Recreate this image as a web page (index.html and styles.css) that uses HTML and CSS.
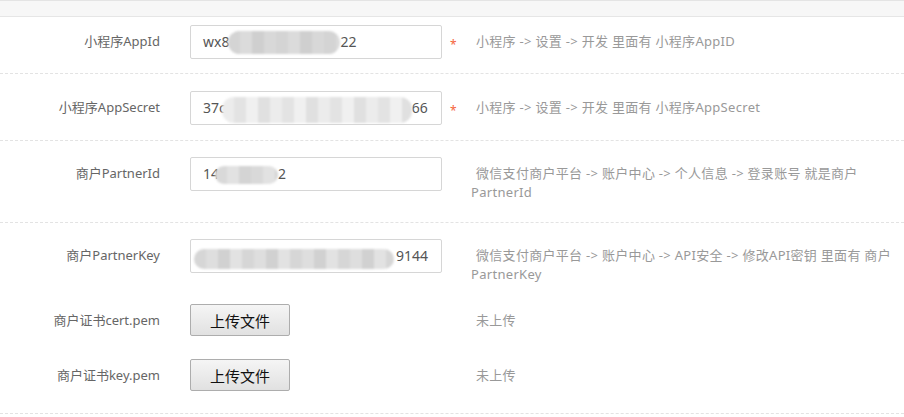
FILE: index.html
```html
<!DOCTYPE html>
<html lang="zh-CN">
<head>
<meta charset="utf-8">
<title>小程序支付设置</title>
<link rel="stylesheet" href="styles.css">
</head>
<body>
<div class="topbar"></div>
<form class="form">
  <div class="row first">
    <label class="lbl">小程序AppId</label>
    <div class="field"><div class="input">wx8<span class="mask m1"></span>22</div></div>
    <span class="req">*</span>
    <div class="help">小程序 -&gt; 设置 -&gt; 开发 里面有 小程序AppID</div>
  </div>
  <div class="row">
    <label class="lbl">小程序AppSecret</label>
    <div class="field"><div class="input">37c<span class="mask m2"></span>66</div></div>
    <span class="req">*</span>
    <div class="help">小程序 -&gt; 设置 -&gt; 开发 里面有 小程序AppSecret</div>
  </div>
  <div class="row">
    <label class="lbl">商户PartnerId</label>
    <div class="field"><div class="input">14<span class="mask m3"></span>2</div></div>
    <span class="req"></span>
    <div class="help">微信支付商户平台 -&gt; 账户中心 -&gt; 个人信息 -&gt; 登录账号 就是商户<br>PartnerId</div>
  </div>
  <div class="row noborder">
    <label class="lbl">商户PartnerKey</label>
    <div class="field"><div class="input"><span class="mask m4"></span>9144</div></div>
    <span class="req"></span>
    <div class="help">微信支付商户平台 -&gt; 账户中心 -&gt; API安全 -&gt; 修改API密钥 里面有 商户<br>PartnerKey</div>
  </div>
  <div class="files">
    <div class="frow">
      <label class="lbl">商户证书cert.pem</label>
      <div class="field"><button type="button" class="btn">上传文件</button></div>
      <span class="req"></span>
      <div class="help">未上传</div>
    </div>
    <div class="frow">
      <label class="lbl">商户证书key.pem</label>
      <div class="field"><button type="button" class="btn">上传文件</button></div>
      <span class="req"></span>
      <div class="help">未上传</div>
    </div>
  </div>
</form>
</body>
</html>
```
FILE: styles.css
```css
body {
  margin: 0;
  background: #fff;
  font-family: "Noto Sans", "Noto Sans CJK SC", sans-serif;
  color: #666;
}
.topbar {
  height: 15px;
  background: #f7f7f7;
  border-top: 1px solid #e4e4e4;
  border-bottom: 1px solid #e6e6e6;
}
.form {
  margin: 0;
}
.row {
  display: flex;
  align-items: flex-start;
  padding: 16px 0 15px;
  border-bottom: 1px dashed #e3e3e3;
}
.row.first {
  padding-top: 8px;
  padding-bottom: 14px;
}
.row.first + .row {
  padding-top: 17px;
}
.row.noborder {
  border-bottom: none;
}
.files {
  display: flex;
  flex-direction: column;
  gap: 23px;
  padding-bottom: 22px;
  border-bottom: 1px dashed #e3e3e3;
}
.frow {
  display: flex;
  align-items: flex-start;
}
.lbl {
  flex: none;
  width: 160px;
  text-align: right;
  padding-top: 7px;
  font-size: 13px;
  line-height: 19px;
  color: #666;
  white-space: nowrap;
}
.field {
  flex: none;
  width: 252px;
  margin-left: 30px;
}
.input {
  box-sizing: border-box;
  height: 34px;
  border: 1px solid #d6d6d6;
  border-radius: 2px;
  padding: 0 12px;
  font-size: 14px;
  line-height: 32px;
  color: #555;
  white-space: nowrap;
  overflow: hidden;
}
.mask {
  display: inline-block;
  vertical-align: middle;
  border-radius: 12px;
  filter: blur(0.8px);
}
.m1 {
  width: 112px;
  height: 23px;
  margin: -2px 0 0 -1px;
  background: repeating-linear-gradient(90deg, #d4d4d4 0 12px, #dbdbdb 12px 24px, #cfcfcf 24px 36px, #d8d8d8 36px 48px);
}
.m2 {
  width: 190px;
  height: 26px;
  margin: 2px 0 0 -4px;
  background: repeating-linear-gradient(90deg, #ececec 0 12px, #e3e3e3 12px 24px, #f0f0f0 24px 36px, #e0e0e0 36px 48px);
}
.m3 {
  width: 63px;
  height: 18px;
  margin: 0 0 0 -4px;
  background: repeating-linear-gradient(90deg, #d9d9d9 0 12px, #e2e2e2 12px 24px, #d4d4d4 24px 36px);
}
.m4 {
  width: 200px;
  height: 20px;
  margin: 4px 2px 0 -9px;
  background: repeating-linear-gradient(90deg, #d6d6d6 0 12px, #dedede 12px 24px, #d1d1d1 24px 36px, #e2e2e2 36px 48px);
}
.req {
  flex: none;
  width: 21px;
  padding-left: 8px;
  padding-top: 10px;
  font-size: 12px;
  line-height: 19px;
  color: #f5643c;
}
.help {
  padding-top: 7px;
  margin-bottom: 5px;
  font-size: 13px;
  line-height: 19px;
  letter-spacing: 0.3px;
  color: #999;
  text-indent: 5px;
}
.btn {
  box-sizing: border-box;
  width: 100px;
  height: 32px;
  margin: 0;
  padding: 0;
  border: 1px solid #adadad;
  border-radius: 2px;
  background: linear-gradient(#f5f5f5, #e1e1e1);
  font-family: "Noto Sans CJK SC", sans-serif;
  font-size: 15px;
  color: #111;
  cursor: pointer;
}
```
